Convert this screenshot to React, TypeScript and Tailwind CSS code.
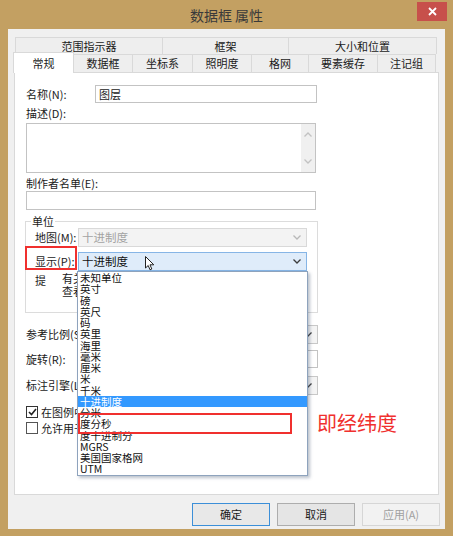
import React from 'react';

const UNITS = [
  '未知单位', '英寸', '磅', '英尺', '码', '英里', '海里', '毫米', '厘米', '米', '千米',
  '十进制度', '分米', '度分秒', '度十进制分', 'MGRS', '美国国家格网', 'UTM',
];

function Chevron({ color = '#3c3c3c', up = false }: { color?: string; up?: boolean }) {
  return (
    <svg width="8" height="5" viewBox="0 0 8 5" className="shrink-0">
      <path
        d={up ? 'M0.5 4.5 L4 1 L7.5 4.5' : 'M0.5 0.5 L4 4 L7.5 0.5'}
        fill="none"
        stroke={color}
        strokeWidth="1.3"
      />
    </svg>
  );
}

function Combo({ text, disabled, hot, className = '' }: { text?: string; disabled?: boolean; hot?: boolean; className?: string }) {
  const look = hot
    ? 'bg-[#dfecfa] border-[#86b5e6] text-[#111]'
    : disabled
      ? 'bg-[#f3f3f3] border-[#d9d9d9] text-[#a3a3a3]'
      : 'bg-[#f4f4f4] border-[#c8c8c8] text-[#111]';
  return (
    <div className={`h-[19px] flex items-center justify-between pl-[3px] pr-[5px] border ${look} ${className}`}>
      <span className="text-[11.5px] leading-[17px]">{text}</span>
      <Chevron color={disabled ? '#b8b8b8' : '#3c3c3c'} />
    </div>
  );
}

function Tab({ label, w, selected, first }: { label: string; w: string; selected?: boolean; first?: boolean }) {
  if (selected) {
    return (
      <div className={`${w} h-[21px] -ml-[2px] -mb-px relative z-10 bg-white border border-b-0 border-[#d9d9d9] flex items-start justify-center pt-[2px]`}>
        {label}
      </div>
    );
  }
  return (
    <div className={`${w} h-[18px] bg-[#eeeeee] border-t border-r border-[#d9d9d9] ${first ? 'border-l' : ''} flex items-center justify-center`}>
      {label}
    </div>
  );
}

function Cursor() {
  return (
    <svg width="10" height="15" viewBox="0 0 10 15">
      <path d="M0.5 0.5 V12 L3.2 9.5 L5 13.8 L6.8 13 L5 8.8 H8.8 Z" fill="white" stroke="#222" strokeWidth="1" />
    </svg>
  );
}

export default function App() {
  return (
    <div className="w-[453px] h-[536px] bg-[#c3a062] flex flex-col font-['Noto_Sans_CJK_SC','Microsoft_YaHei',sans-serif] text-[11px] text-[#1a1a1a] select-none">
      {/* title bar */}
      <div className="h-[29px] grid grid-cols-[1fr_auto_1fr] items-start">
        <div />
        <div className="pt-[6px] text-[14px] leading-[18px] text-[#3a3a3a]">数据框 属性</div>
        <div className="flex justify-end pr-[6px]">
          <div className="mt-[2px] w-[30px] h-[19px] bg-[#c7504b] flex items-center justify-center">
            <svg width="9" height="9" viewBox="0 0 9 9">
              <path d="M1 1 L8 8 M8 1 L1 8" stroke="white" strokeWidth="1.8" />
            </svg>
          </div>
        </div>
      </div>

      {/* body */}
      <div className="mx-[8px] h-[500px] bg-[#f0f0f0] flex flex-col">
        {/* tabs */}
        <div className="mt-[8px] ml-[7px] flex flex-col">
          <div className="flex h-[17px]">
            <div className="w-[148px] bg-[#eeeeee] border-t border-l border-r border-[#d9d9d9] flex items-center justify-center">范围指示器</div>
            <div className="w-[126px] bg-[#eeeeee] border-t border-r border-[#d9d9d9] flex items-center justify-center">框架</div>
            <div className="w-[148px] bg-[#eeeeee] border-t border-r border-[#d9d9d9] flex items-center justify-center">大小和位置</div>
          </div>
          <div className="flex items-end h-[18px]">
            <Tab label="常规" w="w-[61px]" selected />
            <Tab label="数据框" w="w-[59px]" />
            <Tab label="坐标系" w="w-[60px]" />
            <Tab label="照明度" w="w-[59px]" />
            <Tab label="格网" w="w-[57px]" />
            <Tab label="要素缓存" w="w-[69px]" />
            <Tab label="注记组" w="w-[58px]" />
          </div>
        </div>

        {/* panel */}
        <div className="ml-[6px] w-[425px] h-[423px] bg-white border border-[#d9d9d9] pl-[11px] pt-[12px] flex flex-col">
          <div className="flex items-center h-[18px]">
            <span className="w-[69px]">名称(N):</span>
            <div className="w-[222px] h-[18px] border border-[#c3c3c3] pl-[3px] leading-[16px]">图层</div>
          </div>

          <div className="mt-[3px] leading-[14px]">描述(D):</div>
          <div className="mt-[3px] w-[290px] h-[50px] border border-[#c3c3c3] flex">
            <div className="flex-1" />
            <div className="w-[14px] bg-[#f0f0f0] flex flex-col items-center justify-between py-[8px]">
              <Chevron color="#c2c2c2" up />
              <Chevron color="#c2c2c2" />
            </div>
          </div>

          <div className="mt-[3px] leading-[14px]">制作者名单(E):</div>
          <div className="mt-[1px] w-[290px] h-[19px] border border-[#c3c3c3]" />

          <fieldset className="mt-[4px] -ml-[1px] w-[293px] border border-[#dcdcdc] pb-[14px]">
            <legend className="ml-[5px] px-[1px] leading-[14px]">单位</legend>
            <div className="pl-[9px] flex flex-col">
              <div className="flex items-center h-[19px]">
                <span className="w-[43px]">地图(M):</span>
                <Combo text="十进制度" disabled className="w-[229px]" />
              </div>
              <div className="mt-[5px] flex items-center h-[19px] relative">
                <span className="w-[43px]">显示(P):</span>
                <div className="relative w-[229px]">
                  <Combo text="十进制度" hot />
                  <div className="absolute left-[67px] top-[4px] z-30">
                    <Cursor />
                  </div>
                  {/* open drop-down list */}
                  <div className="absolute left-[-1px] top-[19px] w-[231px] z-20 bg-white border border-[#8ea3bd] shadow-[2px_2px_3px_rgba(60,80,110,0.35)]">
                    {UNITS.map((u) => (
                      <div
                        key={u}
                        className={`h-[11.25px] leading-[11.25px] text-[10.5px] pl-[2px] whitespace-nowrap ${u === '十进制度' ? 'bg-[#3399ff] text-white' : 'text-[#111]'}`}
                      >
                        {u}
                      </div>
                    ))}
                    <div className="absolute left-0 top-[141px] w-[214px] h-[21px] border-2 border-[#f0302e]" />
                    <div className="absolute left-[239px] top-[139px] text-[20px] leading-[24px] text-[#f0302e] whitespace-nowrap">即经纬度</div>
                  </div>
                </div>
                <div className="absolute left-[-10px] top-[-6px] w-[52px] h-[24px] border-2 border-[#f0302e] z-30" />
              </div>
              <div className="mt-[1px] flex">
                <span className="w-[27px] pt-[2px] leading-[13px]">提</span>
                <div className="w-[190px] leading-[13px]">
                  <div>有关显示单位的信息，</div>
                  <div>查看帮助主题。</div>
                </div>
              </div>
            </div>
          </fieldset>

          <div className="mt-[12px] w-[292px] flex items-center justify-between h-[18px]">
            <span>参考比例(S):</span>
            <Combo className="w-[212px] h-[18px]" />
          </div>
          <div className="mt-[7px] w-[292px] flex items-center justify-between h-[18px]">
            <span>旋转(R):</span>
            <div className="w-[212px] h-[18px] border border-[#c3c3c3]" />
          </div>
          <div className="mt-[8px] w-[292px] flex items-center justify-between h-[18px]">
            <span>标注引擎(L):</span>
            <Combo className="w-[212px] h-[18px]" />
          </div>

          <div className="mt-[10px] flex items-center h-[16px]">
            <div className="w-[12px] h-[12px] border border-[#333] bg-white flex items-center justify-center">
              <svg width="9" height="8" viewBox="0 0 9 8">
                <path d="M1 4 L3.5 6.5 L8 1" fill="none" stroke="#222" strokeWidth="1.6" />
              </svg>
            </div>
            <span className="ml-[3px]">在图例中显示比例尺</span>
          </div>
          <div className="flex items-center h-[16px]">
            <div className="w-[12px] h-[12px] border border-[#555] bg-white" />
            <span className="ml-[3px]">允许用于地图的动态范围</span>
          </div>
        </div>

        {/* buttons */}
        <div className="mt-[8px] flex justify-end gap-[7px] pr-[5px]">
          <div className="w-[78px] h-[23px] bg-[#e8e8e8] border border-[#3c8fd8] flex items-center justify-center">确定</div>
          <div className="w-[78px] h-[23px] bg-[#e5e5e5] border border-[#adadad] flex items-center justify-center">取消</div>
          <div className="w-[78px] h-[23px] bg-[#f2f2f2] border border-[#d6d6d6] text-[#a0a0a0] flex items-center justify-center">应用(A)</div>
        </div>
      </div>
    </div>
  );
}
